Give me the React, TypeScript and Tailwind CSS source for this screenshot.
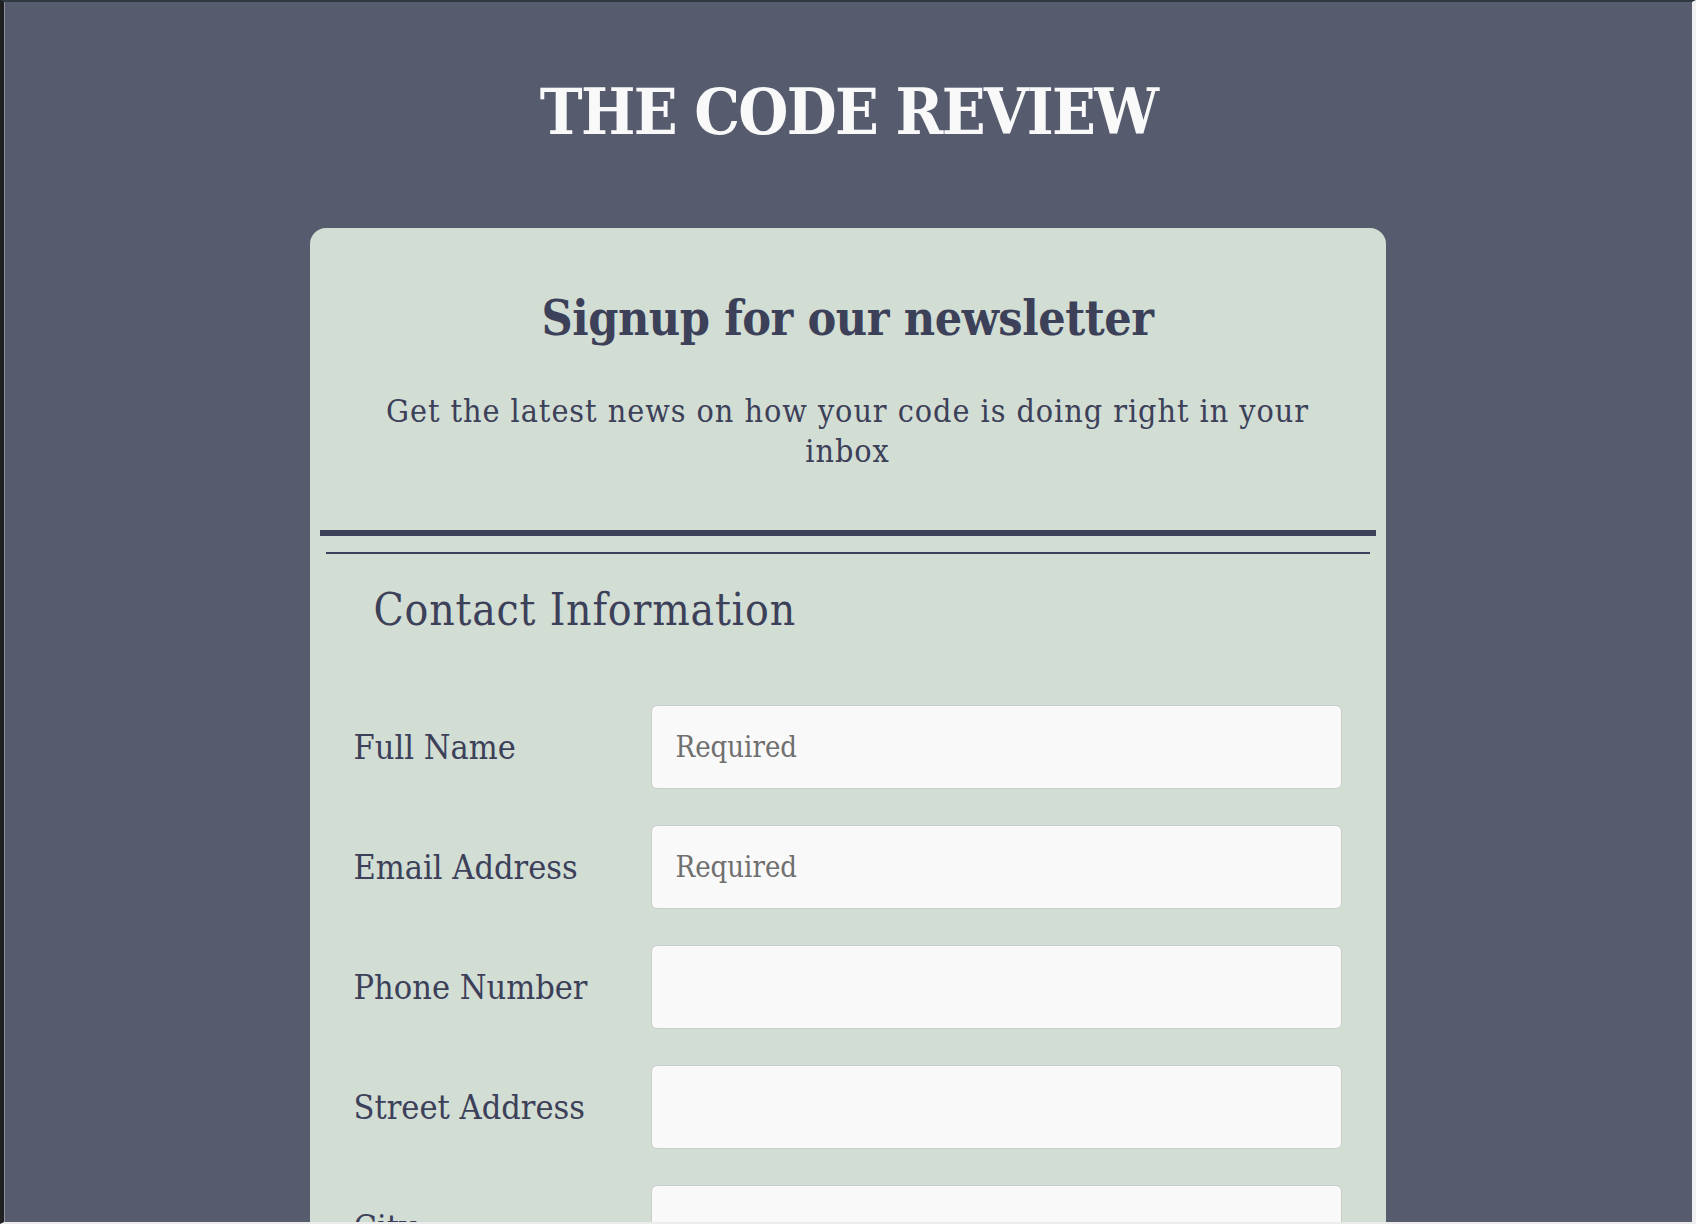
import { ReactNode } from 'react'

const fields = [
  { label: 'Full Name', placeholder: 'Required', type: 'text' },
  { label: 'Email Address', placeholder: 'Required', type: 'email' },
  { label: 'Phone Number', placeholder: '', type: 'tel' },
  { label: 'Street Address', placeholder: '', type: 'text' },
  { label: 'City', placeholder: '', type: 'text' },
  { label: 'State', placeholder: '', type: 'text' },
  { label: 'Zip Code', placeholder: '', type: 'text' },
]

function Row({ label, children }: { label: string; children: ReactNode }) {
  return (
    <div className="flex items-center">
      <label className="w-[297px] shrink-0 text-[34px] leading-[42px] text-[#3c4059]">{label}</label>
      {children}
    </div>
  )
}

export default function App() {
  return (
    <div className="h-[1224px] overflow-hidden border-t-2 border-b-2 border-l-4 border-r-4 border-t-[#2e393d] border-b-[#ececec] border-l-[#202020] border-r-[#f1f1f1] bg-[#565b6e] font-['DejaVu_Serif_Condensed','DejaVu_Serif',serif] font-stretch-condensed">
      <div className="h-full border-l border-l-[#8a8fa0]">
        {/* Masthead */}
        <h1 className="pt-[70px] text-center text-[64px] leading-[80px] font-bold tracking-[-1.7px] text-[#f9f9f9]">THE CODE REVIEW</h1>

        {/* Signup card */}
        <main className="mx-auto mt-[76px] w-[1076px] -translate-x-px rounded-2xl bg-[#d2ddd4] px-2.5 pt-[60px] pb-10">
          <header className="border-b-[6px] border-[#3c4059] pb-[59px] text-center text-[#3c4059]">
            <h2 className="text-[48px] leading-[60px] font-bold tracking-[-0.45px]">Signup for our newsletter</h2>
            <p className="mx-auto mt-[43px] max-w-[950px] text-[32px] leading-[40px] tracking-[0.95px]">
              Get the latest news on how your code is doing right in your inbox
            </p>
          </header>

          <hr className="mx-1.5 mt-4 border-t-2 border-[#3c4059]" />

          <form>
            <h3 className="mt-[28px] pl-[54px] text-[44px] leading-[55px] tracking-[0.8px] text-[#3c4059]">Contact Information</h3>

            <div className="mt-[68px] flex flex-col gap-9 px-[34px]">
              {fields.map((f) => (
                <Row key={f.label} label={f.label}>
                  <input
                    type={f.type}
                    placeholder={f.placeholder}
                    className="h-[84px] w-full rounded-md border border-[#c9cbc9] bg-[#f9f9f9] px-6 text-[29px] text-[#3c4059] placeholder:text-[#6f6f6f] outline-none"
                  />
                </Row>
              ))}
            </div>
          </form>
        </main>
      </div>
    </div>
  )
}
